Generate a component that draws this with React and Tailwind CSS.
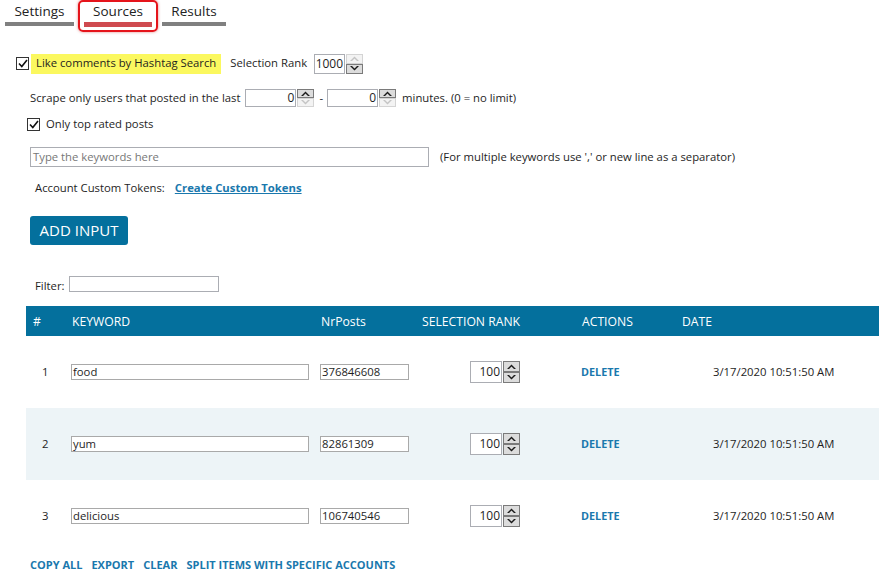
import React from 'react'

const font = "font-['Open_Sans',sans-serif]"

function Arrow({ dir, off }) {
  const d = dir === 'up'
    ? 'M0 5 L4.5 0.5 L9 5 L7 5 L4.5 2.6 L2 5 Z'
    : 'M0 0 L4.5 4.5 L9 0 L7 0 L4.5 2.4 L2 0 Z'
  return (
    <svg width="9" height="5" viewBox="0 0 9 5">
      <path d={d} fill={off ? '#c4c4c4' : '#1a1a1a'} />
    </svg>
  )
}

function SpinBtn({ dir, off }) {
  return (
    <div className={'flex-1 flex items-center justify-center border ' + (off ? 'border-[#d4d4d4] bg-[#f3f3f3]' : 'border-[#7a7a7a] bg-[#dcdcdc]')}>
      <Arrow dir={dir} off={off} />
    </div>
  )
}

function Spinner({ value, boxClass, upOff, downOff }) {
  return (
    <div className={'flex ' + boxClass}>
      <div className="flex-1 border border-[#abadb3] bg-white flex items-center justify-end pr-[1px] text-[12px] text-[#1e1e1e]">{value}</div>
      <div className="w-[17px] flex flex-col ml-[1px]">
        <SpinBtn dir="up" off={upOff} />
        <SpinBtn dir="down" off={downOff} />
      </div>
    </div>
  )
}

function Check() {
  return (
    <span className="w-[13px] h-[13px] border border-[#333] bg-white flex items-center justify-center">
      <svg width="10" height="9" viewBox="0 0 10 9">
        <path d="M1 4.5 L3.8 7.5 L9 1" stroke="#111" strokeWidth="1.6" fill="none" />
      </svg>
    </span>
  )
}

const rows = [
  { n: 1, kw: 'food', posts: '376846608' },
  { n: 2, kw: 'yum', posts: '82861309' },
  { n: 3, kw: 'delicious', posts: '106740546' },
]

export default function App() {
  return (
    <div className={'w-[885px] h-[576px] bg-white overflow-hidden text-[11.3px] text-[#1e1e1e] ' + font}>
      {/* tabs */}
      <div className="flex pl-[5px] h-[32px]">
        <div className="w-[69px] flex flex-col items-center">
          <span className="text-[13.5px] leading-[18px] mt-[2px] text-[#222]">Settings</span>
          <div className="h-[4px] w-full bg-[#808080] mt-[2px]" />
        </div>
        <div className="ml-[4px] w-[80px] h-[32px] border-2 border-[#e5141b] rounded-[5px] px-[4px] flex flex-col items-center shadow-[0_0_3px_rgba(200,0,0,0.5)]">
          <span className="text-[13.5px] leading-[18px] text-[#222]">Sources</span>
          <div className="h-[5px] w-full bg-[#cf4a4f] mt-[2px]" />
        </div>
        <div className="ml-[4px] w-[64px] flex flex-col items-center">
          <span className="text-[13.5px] leading-[18px] mt-[2px] text-[#222]">Results</span>
          <div className="h-[4px] w-full bg-[#808080] mt-[2px]" />
        </div>
      </div>

      <div className="pl-[16px]">
        {/* row 1 */}
        <div className="flex items-center h-[21px] mt-[21px]">
          <Check />
          <span className="ml-[2px] h-[20px] bg-[#fbf85f] px-[5px] flex items-center">Like comments by Hashtag Search</span>
          <span className="ml-[9px]">Selection Rank</span>
          <Spinner value="1000" boxClass="ml-[7px] w-[49px] h-[20px]" upOff />
        </div>

        {/* row 2 */}
        <div className="flex items-center h-[18px] mt-[15px] ml-[14px]">
          <span>Scrape only users that posted in the last</span>
          <Spinner value="0" boxClass="ml-[5px] w-[69px] h-[18px]" downOff />
          <span className="ml-[5px]">-</span>
          <Spinner value="0" boxClass="ml-[4px] w-[69px] h-[18px]" downOff />
          <span className="ml-[6px]">minutes. (0 = no limit)</span>
        </div>

        {/* row 3 */}
        <div className="flex items-center h-[13px] mt-[11px] ml-[11px]">
          <Check />
          <span className="ml-[6px]">Only top rated posts</span>
        </div>

        {/* keywords input */}
        <div className="flex items-center mt-[16px] ml-[14px]">
          <div className="w-[399px] h-[20px] border border-[#abadb3] flex items-center pl-[2px] text-[#777]">Type the keywords here</div>
          <span className="ml-[11px]">(For multiple keywords use ',' or new line as a separator)</span>
        </div>

        {/* tokens */}
        <div className="flex items-center h-[16px] mt-[13px] ml-[19px]">
          <span>Account Custom Tokens:</span>
          <span className="ml-[10px] font-bold underline text-[#1a78ad]">Create Custom Tokens</span>
        </div>

        <button className="mt-[20px] ml-[14px] w-[98px] h-[29px] bg-[#04709d] rounded-[3px] text-white text-[15px] flex items-center justify-center">ADD INPUT</button>

        {/* filter */}
        <div className="flex items-end mt-[31px] ml-[19px]">
          <span className="leading-[14px] mb-[-1px]">Filter:</span>
          <div className="ml-[4px] w-[150px] h-[16px] border border-[#abadb3]" />
        </div>
      </div>

      {/* table */}
      <div className="ml-[26px] w-[853px] mt-[14px]">
        <div className="grid grid-cols-[38px_249px_101px_160px_100px_205px] h-[30px] pt-[3px] bg-[#04709d] text-white text-[12.2px] items-center">
          <span className="pl-[7px]">#</span>
          <span className="pl-[8px]">KEYWORD</span>
          <span className="pl-[8px]">NrPosts</span>
          <span className="pl-[8px]">SELECTION RANK</span>
          <span className="pl-[8px]">ACTIONS</span>
          <span className="pl-[8px]">DATE</span>
        </div>
        {rows.map((r) => (
          <div key={r.n} className={'grid grid-cols-[38px_249px_101px_160px_100px_205px] h-[72px] items-center ' + (r.n === 2 ? 'bg-[#edf4f7]' : 'bg-white')}>
            <span className="pl-[16px]">{r.n}</span>
            <div className="ml-[7px] w-[238px] h-[16px] border border-[#a9a9a9] bg-white flex items-center pl-[1px]">{r.kw}</div>
            <div className="ml-[7px] w-[89px] h-[16px] border border-[#a9a9a9] bg-white flex items-center pl-[1px]">{r.posts}</div>
            <Spinner value="100" boxClass="ml-[56px] w-[50px] h-[22px]" />
            <span className="ml-[7px] font-bold text-[10.8px] text-[#1a78ad]">DELETE</span>
            <span className="ml-[39px]">3/17/2020 10:51:50 AM</span>
          </div>
        ))}
      </div>

      {/* bottom links */}
      <div className="flex gap-[9px] mt-[6px] ml-[30px] h-[14px] items-center font-bold text-[11px] text-[#1a78ad]">
        <span>COPY ALL</span>
        <span>EXPORT</span>
        <span>CLEAR</span>
        <span>SPLIT ITEMS WITH SPECIFIC ACCOUNTS</span>
      </div>
    </div>
  )
}
